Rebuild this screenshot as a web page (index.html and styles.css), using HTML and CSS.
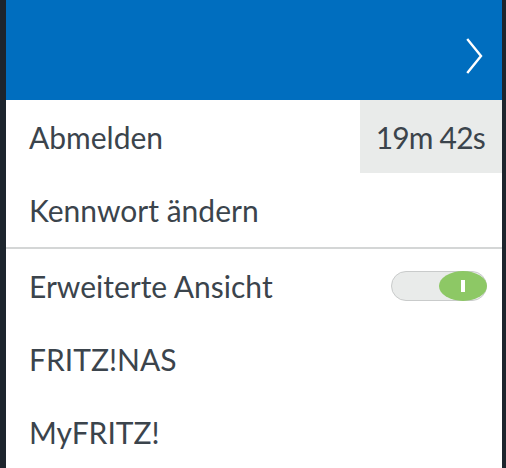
FILE: index.html
```html
<!DOCTYPE html>
<html lang="de">
<head>
<meta charset="utf-8">
<link rel="stylesheet" href="styles.css">
</head>
<body>
<div class="panel">
  <header class="top">
    <svg class="chev" width="20" height="36" viewBox="0 0 20 36"><path d="M2 2 L15 18 L2 34" fill="none" stroke="#fff" stroke-width="2.4" stroke-linecap="square"/></svg>
  </header>
  <div class="row"><span class="label">Abmelden</span><span class="timer">19m 42s</span></div>
  <div class="row sep"><span class="label">Kennwort ändern</span></div>
  <div class="row"><span class="label">Erweiterte Ansicht</span>
    <span class="toggle"><span class="knob"><span class="bar"></span></span></span>
  </div>
  <div class="row"><span class="label">FRITZ!NAS</span></div>
  <div class="row"><span class="label">MyFRITZ!</span></div>
</div>
</body>
</html>
```
FILE: styles.css
```css
html, body { margin: 0; padding: 0; }
body {
  background: #1d252d;
  width: 506px;
  height: 468px;
  overflow: hidden;
  font-family: Lato, "Open Sans", sans-serif;
}
.panel {
  margin: 0 4px 0 6px;
  background: #fff;
  height: 468px;
}
.top {
  height: 100px;
  background: #006ebf;
  display: flex;
  align-items: center;
  justify-content: flex-end;
  padding-right: 16px;
  padding-top: 12px;
  box-sizing: border-box;
}
.chev { display: block; }
.row {
  height: 73px;
  display: flex;
  align-items: center;
  justify-content: space-between;
  padding-left: 23px;
  box-sizing: border-box;
}
.row.sep { border-bottom: 2px solid #d4d6d6; height: 76px; }
.label {
  font-size: 30px;
  color: #3b444c;
}
.timer {
  align-self: stretch;
  width: 142px;
  background: #e9ebea;
  display: flex;
  align-items: center;
  justify-content: flex-end;
  padding-right: 17px;
  box-sizing: border-box;
  font-size: 30px;
  letter-spacing: -0.8px;
  color: #3b444c;
}
.toggle {
  width: 96px;
  height: 30px;
  box-sizing: border-box;
  border: 1px solid #c9cbcb;
  background: #e9ebea;
  border-radius: 15px;
  margin-right: 15px;
  display: flex;
  justify-content: flex-end;
}
.knob {
  width: 48px;
  height: 30px;
  margin: -1px -1px 0 0;
  flex-shrink: 0;
  border-radius: 50%;
  background: #8dc865;
  display: flex;
  align-items: center;
  justify-content: center;
}
.bar { width: 4px; height: 12px; background: #fff; }
```
